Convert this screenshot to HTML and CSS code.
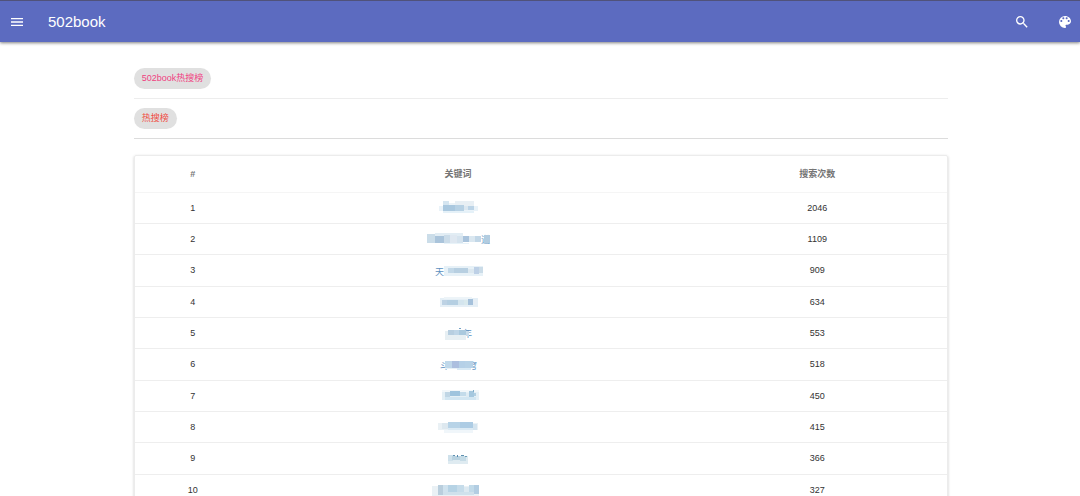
FILE: index.html
```html
<!DOCTYPE html>
<html lang="zh-CN">
<head>
<meta charset="utf-8">
<meta name="viewport" content="width=device-width, initial-scale=1">
<title>502book</title>
<link rel="stylesheet" href="styles.css">
</head>
<body>
<header class="appbar">
  <button class="icon-button" type="button" aria-label="菜单"><svg viewBox="0 0 24 24"><path d="M3 18h18v-2H3v2zm0-5h18v-2H3v2zm0-7v2h18V6H3z"/></svg></button>
  <a class="brand" href="#">502book</a>
  <button class="icon-button search" type="button" aria-label="搜索"><svg viewBox="0 0 24 24"><path d="M15.5 14h-.79l-.28-.27A6.47 6.47 0 0 0 16 9.5 6.5 6.5 0 1 0 9.5 16c1.61 0 3.09-.59 4.23-1.57l.27.28v.79l5 4.99L20.49 19l-4.99-5zm-6 0C7.01 14 5 11.99 5 9.5S7.01 5 9.5 5 14 7.01 14 9.5 11.99 14 9.5 14z"/></svg></button>
  <button class="icon-button" type="button" aria-label="主题"><svg viewBox="0 0 24 24"><path d="M12 3a9 9 0 0 0 0 18c.83 0 1.5-.67 1.5-1.5 0-.39-.15-.74-.39-1.01-.23-.26-.38-.61-.38-.99 0-.83.67-1.5 1.5-1.5H16c2.76 0 5-2.24 5-5 0-4.42-4.03-8-9-8zm-5.5 9c-.83 0-1.5-.67-1.5-1.5S5.67 9 6.5 9 8 9.67 8 10.5 7.33 12 6.5 12zm3-4C8.67 8 8 7.33 8 6.5S8.67 5 9.5 5s1.5.67 1.5 1.5S10.33 8 9.5 8zm5 0c-.83 0-1.5-.67-1.5-1.5S13.67 5 14.5 5s1.5.67 1.5 1.5S15.33 8 14.5 8zm3 4c-.83 0-1.5-.67-1.5-1.5S16.67 9 17.5 9s1.5.67 1.5 1.5-.67 1.5-1.5 1.5z"/></svg></button>
</header>
<main class="container">
  <div class="chip-row"><span class="chip pink">502book热搜榜</span></div>
  <div class="chip-row strong"><span class="chip red">热搜榜</span></div>
  <div class="card">
    <table class="ranking">
      <thead><tr><th class="rank">#</th><th class="keyword">关键词</th><th class="count">搜索次数</th></tr></thead>
      <tbody id="rows"></tbody>
    </table>
  </div>
</main>
<script src="ranking.js"></script>
</body>
</html>
```
FILE: styles.css
```css
* { box-sizing: border-box; }
html { overflow: hidden; }
body {
  margin: 0;
  background: #fff;
  color: #333;
  font: 9px/13px "Liberation Sans", "Noto Sans CJK SC", sans-serif;
}
.appbar {
  display: flex;
  align-items: center;
  height: 42px;
  padding: 1px 7px 0 9px;
  border-top: 1px solid #50527a;
  background: #5c6bc0;
  color: #fff;
  box-shadow: 0 1px 3px rgba(0, 0, 0, .5);
}
.icon-button {
  display: flex;
  padding: 0;
  border: 0;
  background: none;
  color: inherit;
}
.icon-button svg {
  width: 16px;
  height: 16px;
  fill: currentColor;
}
.brand {
  margin-left: 23px;
  color: inherit;
  font-size: 15px;
  line-height: 20px;
  text-decoration: none;
}
.search { margin: 0 27px 0 auto; }
.container {
  width: 75.6%;
  margin: 0 auto;
  padding: 26px 0 0 2px;
}
.chip-row {
  height: 31px;
  margin-bottom: 9px;
  border-bottom: 1px solid #ededed;
}
.chip-row.strong {
  margin-bottom: 16px;
  border-color: #dcdcdc;
}
.chip {
  display: inline-block;
  padding: 0 8px;
  border-radius: 11px;
  background: #e0e0e0;
  line-height: 21px;
}
.pink { color: #f04080; }
.red { color: #f04b42; }
.card {
  border: 1px solid #ececec;
  border-radius: 2px;
  box-shadow: 0 1px 3px rgba(0, 0, 0, .2);
}
.ranking {
  width: 100%;
  table-layout: fixed;
  border-collapse: separate;
  border-spacing: 0;
  text-align: center;
}
.ranking th {
  height: 37px;
  padding: 0;
  border-bottom: 1px solid #f5f5f5;
  color: #757575;
  font-weight: 700;
}
.ranking td {
  height: 31px;
  padding: 0;
  border-bottom: 1px solid #eee;
}
.ranking tbody tr:nth-child(3n) td { height: 32px; }
.ranking .rank { width: 14.3%; }
.ranking .keyword { width: 51%; }
.ranking .count { padding-left: 22px; }
.mosaic {
  display: block;
  width: 76px;
  height: 16px;
  margin: 0 auto;
}
.mosaic text {
  fill: #5b8fc0;
  font-size: 9px;
}
```
FILE: ranking.js
```js
// Each mosaic is [x, y, width, height, colour] blocks in a 76 by 16 box.
const entries = [
  { count: 2046, blocks: [[19,6,39,5,'#eaf3f9'],[23,1,6,4,'#d5e5f0'],[29,3,6,3,'#edf4f8'],[35,1,19,5,'#e8eff4'],[23,5,12,6,'#aac8df'],[35,5,9,6,'#b7d1e4'],[44,6,4,4,'#dbe7f0'],[48,6,6,4,'#bcd4e7'],[23,11,31,2,'#e5f1f8']] },
  { count: 1109, text: [[61,12,'道']], blocks: [[7,3,8,9,'#cbdde9'],[15,2,28,3,'#e2edf4'],[15,5,9,7,'#aac4db'],[24,4,6,8,'#cbdce9'],[30,4,7,8,'#dfe8f1'],[37,5,6,7,'#d5e3ee'],[43,5,6,6,'#a9c3dc'],[49,5,6,6,'#dae7f0'],[55,5,6,6,'#c2d7e7'],[64,4,6,8,'#b2cce0'],[24,12,25,1,'#e8f3f9']] },
  { count: 909, text: [[15,12,'天']], blocks: [[24,3,39,10,'#e7f1f7'],[28,5,6,5,'#c2d8e8'],[34,5,14,5,'#b7cfe1'],[48,6,6,4,'#dce8f0'],[54,4,5,7,'#bdd0e6'],[59,4,4,6,'#cbdce8']] },
  { count: 634, blocks: [[20,4,38,9,'#e5eff6'],[24,3,28,2,'#edf4f8'],[22,6,5,5,'#bdd2e4'],[27,6,11,5,'#b5cfe2'],[38,6,6,5,'#d4e5ee'],[44,6,4,5,'#d9e9ed'],[48,5,5,6,'#a5c1db'],[53,6,4,5,'#e6eef5']] },
  { count: 553, text: [[43,12,'年']], blocks: [[25,6,21,9,'#e7eff3'],[28,5,6,5,'#b7cee0'],[34,5,5,5,'#bed5e7'],[39,5,7,5,'#aac9de'],[46,6,3,5,'#c9dcea'],[39,3,2,1,'#75a2c5']] },
  { count: 518, text: [[20,12,'斗'],[48,12,'穹']], blocks: [[25,4,7,7,'#c0d8ea'],[32,4,7,7,'#acbfdf'],[39,4,6,7,'#b5d0e7'],[45,4,8,7,'#b7d2e7'],[37,11,14,2,'#d9eaf5'],[25,11,12,1,'#e7f1f7']] },
  { count: 450, blocks: [[22,4,37,8,'#e5f0f6'],[22,2,37,2,'#f2f7fa'],[25,4,5,5,'#c0d6e5'],[30,3,10,5,'#9fc4de'],[40,4,6,4,'#c3dbea'],[46,5,3,5,'#deebf3'],[49,3,5,7,'#a5c8df'],[54,5,2,3,'#b1cfe2'],[25,9,31,3,'#d2e6f2'],[53,2,1,2,'#81adc9']] },
  { count: 415, blocks: [[18,4,40,7,'#eaf1f5'],[22,4,6,6,'#dde8ef'],[28,3,12,6,'#b7d3e7'],[40,3,13,7,'#adcce4'],[53,5,4,6,'#d4e4ef'],[28,9,25,4,'#dbeaf4'],[24,11,29,3,'#f0f6fa']] },
  { count: 366, blocks: [[28,5,20,8,'#dfebf1'],[28,4,5,6,'#cfe1eb'],[32,5,8,4,'#b9d2e0'],[40,5,6,5,'#c5dbe6'],[33,4,2,1,'#5f91b2'],[37,4,1,2,'#5488ad'],[41,4,3,1,'#5e90b0'],[45,5,2,1,'#6c9eb7']] },
  { count: 327, blocks: [[12,4,47,10,'#eaf1f5'],[18,3,5,10,'#b9cedd'],[23,3,5,7,'#cfe2ee'],[28,3,9,7,'#b6d3e5'],[37,3,7,7,'#c6dcea'],[44,5,5,6,'#dce9f1'],[49,3,5,8,'#c1dae9'],[54,3,5,9,'#b2cde2'],[23,10,31,3,'#cfe1ec']] }
];
document.getElementById('rows').innerHTML = entries.map((e, i) => {
  const rects = e.blocks.map(b => `<rect x="${b[0]}" y="${b[1]}" width="${b[2]}" height="${b[3]}" fill="${b[4]}"/>`).join('');
  const texts = (e.text || []).map(t => `<text x="${t[0]}" y="${t[1]}">${t[2]}</text>`).join('');
  return `<tr><td>${i + 1}</td><td><svg class="mosaic" viewBox="0 0 76 16">${texts}${rects}</svg></td><td class="count">${e.count}</td></tr>`;
}).join('');
```
